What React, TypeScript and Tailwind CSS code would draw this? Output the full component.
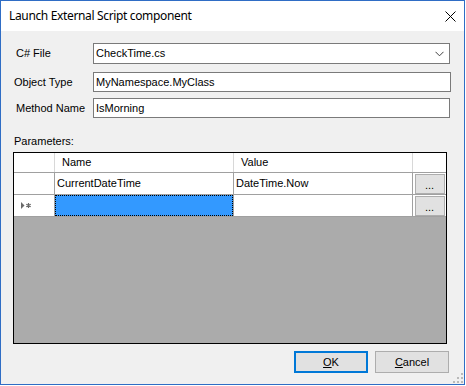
import React from "react";

const sans = { fontFamily: '"Liberation Sans", Arial, sans-serif' };

function Chevron() {
  return (
    <svg width="9" height="6" viewBox="0 0 9 6" className="block">
      <path d="M0.5 0.8 L4.5 4.8 L8.5 0.8" fill="none" stroke="#404040" strokeWidth="1" />
    </svg>
  );
}

function CloseX() {
  return (
    <svg width="11" height="11" viewBox="0 0 11 11" className="block">
      <path d="M0.5 0.5 L10.5 10.5 M10.5 0.5 L0.5 10.5" stroke="#000" strokeWidth="1" />
    </svg>
  );
}

function NewRowGlyph() {
  return (
    <svg width="11" height="7" viewBox="0 0 11 7" className="block">
      <path d="M0 0 L3.5 3.5 L0 7 Z" fill="#6a6a6a" />
      <path d="M7.5 1 L7.5 6 M5.3 2.2 L9.7 4.8 M9.7 2.2 L5.3 4.8" stroke="#6a6a6a" strokeWidth="1.2" />
    </svg>
  );
}

function Grip() {
  const dots = [
    [8, 0],
    [4, 4],
    [8, 4],
    [0, 8],
    [4, 8],
    [8, 8],
  ];
  return (
    <svg width="10" height="10" viewBox="0 0 10 10" className="block">
      {dots.map(([x, y]) => (
        <rect key={`${x}-${y}`} x={x} y={y} width="2" height="2" fill="#b9b9b9" />
      ))}
    </svg>
  );
}

function EllipsisButton() {
  return (
    <div className="w-[33px] h-full flex items-center justify-center">
      <div className="w-[30px] h-[20px] bg-[#e1e1e1] border border-[#adadad] flex items-end justify-center pb-[2px] text-[11px] leading-[11px] text-black">
        ...
      </div>
    </div>
  );
}

export default function App() {
  return (
    <div className="w-[466px] h-[386px] bg-white" style={sans}>
      <div className="w-[465px] h-[385px] border border-[#2f6dc5] bg-[#f0f0f0] flex flex-col relative">
        {/* Title bar */}
        <div className="h-[30px] bg-white flex items-center justify-between pl-[8px] pr-[8px] shrink-0">
          <span
            className="text-[12px] tracking-[-0.35px] text-black leading-none"
            style={{ fontFamily: '"Noto Sans", "Open Sans", sans-serif' }}
          >
            Launch External Script component
          </span>
          <CloseX />
        </div>

        {/* Body */}
        <div className="flex flex-col text-[11px] text-black">
          {/* C# File */}
          <div className="mt-[12px] flex items-center h-[21px]">
            <div className="w-[92px] pl-[15px]">C# File</div>
            <div className="w-[357px] h-[21px] border border-[#7a7a7a] bg-white flex items-center justify-between pl-[2px] pr-[5px]">
              <span>CheckTime.cs</span>
              <Chevron />
            </div>
          </div>

          {/* Object Type */}
          <div className="mt-[8px] flex items-center h-[20px]">
            <div className="w-[92px] pl-[13px]">Object Type</div>
            <div className="w-[358px] h-[20px] border border-[#7a7a7a] bg-white flex items-center pl-[2px]">
              MyNamespace.MyClass
            </div>
          </div>

          {/* Method Name */}
          <div className="mt-[6px] flex items-center h-[20px]">
            <div className="w-[92px] pl-[15px]">Method Name</div>
            <div className="w-[357px] h-[20px] border border-[#7a7a7a] bg-white flex items-center pl-[2px]">
              IsMorning
            </div>
          </div>

          {/* Parameters label */}
          <div className="mt-[17px] h-[13px] leading-[13px] pl-[13px]">Parameters:</div>

          {/* Grid */}
          <div className="mt-[4px] ml-[12px] w-[434px] h-[192px] border border-black bg-[#ababab] flex flex-col">
            {/* Header */}
            <div className="h-[20px] flex bg-white border-b border-[#a0a0a0] shrink-0">
              <div className="w-[41px] border-r border-[#d8d8d8]" />
              <div className="w-[179px] border-r border-[#d8d8d8] flex items-center pl-[7px]">Name</div>
              <div className="w-[179px] border-r border-[#d8d8d8] flex items-center pl-[7px]">Value</div>
              <div className="w-[33px]" />
            </div>
            {/* Row 1 */}
            <div className="h-[22px] flex bg-white border-b border-[#a0a0a0] shrink-0">
              <div className="w-[41px] border-r border-[#a0a0a0]" />
              <div className="w-[179px] border-r border-[#a0a0a0] flex items-center pl-[2px]">CurrentDateTime</div>
              <div className="w-[179px] border-r border-[#a0a0a0] flex items-center pl-[2px]">DateTime.Now</div>
              <EllipsisButton />
            </div>
            {/* Row 2 (new row) */}
            <div className="h-[22px] flex bg-white border-b border-[#a0a0a0] shrink-0">
              <div className="w-[41px] border-r border-[#a0a0a0] flex items-center pl-[7px]">
                <NewRowGlyph />
              </div>
              <div className="w-[179px] border-r border-[#a0a0a0] bg-[#3399ff]">
                <div className="w-full h-full border border-dotted border-black" />
              </div>
              <div className="w-[179px] border-r border-[#a0a0a0]" />
              <EllipsisButton />
            </div>
          </div>

          {/* Buttons */}
          <div className="mt-[7px] flex justify-end gap-[7px] pr-[15px]">
            <div className="w-[74px] h-[22px] bg-[#e1e1e1] border-2 border-[#0078d7] flex items-center justify-center">
              <span>
                <span className="underline">O</span>K
              </span>
            </div>
            <div className="w-[74px] h-[22px] bg-[#e1e1e1] border border-[#adadad] flex items-center justify-center">
              <span>
                <span className="underline">C</span>ancel
              </span>
            </div>
          </div>
        </div>

        <div className="absolute right-[1px] bottom-[1px]">
          <Grip />
        </div>
      </div>
    </div>
  );
}
